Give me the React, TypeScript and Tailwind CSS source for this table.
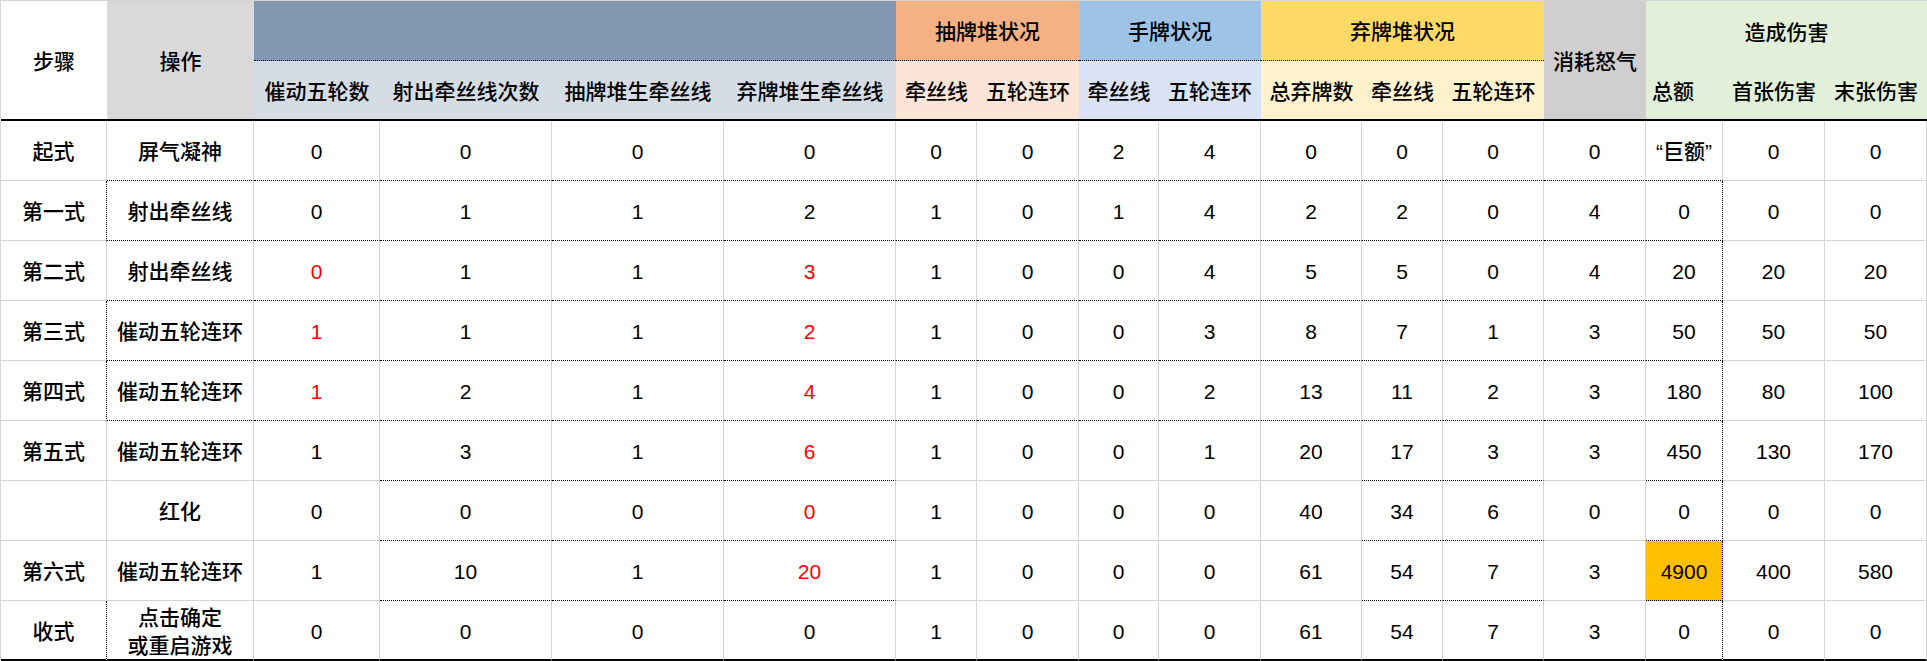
import React from "react";

const COLS =
  "grid-cols-[106px_147px_126px_172px_172px_172px_81px_102px_80px_102px_101px_81px_101px_102px_77px_102px_102px]";

const bottomCls: Record<string, string> = {
  g: "border-b border-b-[#d4d4d4]",
  d: "border-b border-b-black [border-bottom-style:dotted]!",
  k: "border-b-2 border-b-black",
};

const rightCls: Record<string, string> = {
  g: "border-r border-r-[#d4d4d4]",
  d: "border-r border-r-black [border-right-style:dotted]!",
};

// border maps: one letter per column, g = grey grid line, d = dotted black, k = thick black
const B_FULL = "g" + "d".repeat(14) + "gg";
const B_PART = "gggdddgggggddgdgg";
const B_LAST = "k".repeat(17);
const R_FIRST = "g".repeat(17);
const rDot = (left: string) => left + "g".repeat(13) + "dgg";

type Row = { step: string; op: string; v: string[]; red: number[]; b: string; r: string };

const rows: Row[] = [
  { step: "起式", op: "屏气凝神", v: ["0", "0", "0", "0", "0", "0", "2", "4", "0", "0", "0", "0", "“巨额”", "0", "0"], red: [], b: B_FULL, r: R_FIRST },
  { step: "第一式", op: "射出牵丝线", v: ["0", "1", "1", "2", "1", "0", "1", "4", "2", "2", "0", "4", "0", "0", "0"], red: [], b: B_FULL, r: rDot("d") },
  { step: "第二式", op: "射出牵丝线", v: ["0", "1", "1", "3", "1", "0", "0", "4", "5", "5", "0", "4", "20", "20", "20"], red: [0, 3], b: B_FULL, r: rDot("g") },
  { step: "第三式", op: "催动五轮连环", v: ["1", "1", "1", "2", "1", "0", "0", "3", "8", "7", "1", "3", "50", "50", "50"], red: [0, 3], b: B_FULL, r: rDot("d") },
  { step: "第四式", op: "催动五轮连环", v: ["1", "2", "1", "4", "1", "0", "0", "2", "13", "11", "2", "3", "180", "80", "100"], red: [0, 3], b: B_FULL, r: rDot("d") },
  { step: "第五式", op: "催动五轮连环", v: ["1", "3", "1", "6", "1", "0", "0", "1", "20", "17", "3", "3", "450", "130", "170"], red: [3], b: B_PART, r: rDot("g") },
  { step: "", op: "红化", v: ["0", "0", "0", "0", "1", "0", "0", "0", "40", "34", "6", "0", "0", "0", "0"], red: [3], b: B_PART, r: rDot("g") },
  { step: "第六式", op: "催动五轮连环", v: ["1", "10", "1", "20", "1", "0", "0", "0", "61", "54", "7", "3", "4900", "400", "580"], red: [3], b: B_PART, r: rDot("g") },
  { step: "收式", op: "点击确定\n或重启游戏", v: ["0", "0", "0", "0", "1", "0", "0", "0", "61", "54", "7", "3", "0", "0", "0"], red: [], b: B_LAST, r: rDot("d") },
];

function Cell({ text, b, r, red, hi }: { text: string; b: string; r: string; red?: boolean; hi?: boolean }) {
  return (
    <div
      className={`flex items-center justify-center pt-[3px] whitespace-pre-line text-center leading-[28px] ${bottomCls[b]} ${rightCls[r]} ${red ? "text-[#ff0000]" : ""} ${hi ? "bg-[#ffc000]" : ""}`}
    >
      {text}
    </div>
  );
}

const sub = "flex items-center justify-center pt-[3px] border-b-2 border-b-black";

export default function App() {
  return (
    <div className="w-[1927px] h-[661px] bg-white overflow-hidden text-[21px] font-medium text-black font-['Liberation_Sans','Noto_Sans_CJK_SC',sans-serif]">
      <div className={`grid ${COLS} grid-rows-[60px_60px_repeat(9,60px)] border-t border-l border-[#d4d4d4]`}>
        {/* header, first band */}
        <div className="row-span-2 flex items-center justify-center pt-[3px] bg-white border-b-2 border-b-black">步骤</div>
        <div className="row-span-2 flex items-center justify-center pt-[3px] bg-[#d9d9d9] border-b-2 border-b-black">操作</div>
        <div className="col-span-4 bg-[#8497b0] border-b border-b-black border-dotted" />
        <div className="col-span-2 flex items-center justify-center pt-[3px] bg-[#f4b183] border-b border-b-black border-dotted">抽牌堆状况</div>
        <div className="col-span-2 flex items-center justify-center pt-[3px] bg-[#9dc3e6] border-b border-b-black border-dotted">手牌状况</div>
        <div className="col-span-3 flex items-center justify-center pt-[3px] bg-[#ffd966] border-b border-b-black border-dotted">弃牌堆状况</div>
        <div className="row-span-2 flex items-center justify-center pt-[3px] bg-[#d0cece] border-b-2 border-b-black">消耗怒气</div>
        <div className="col-span-3 flex items-center justify-center pt-[3px] bg-[#e2f0d9]">造成伤害</div>

        {/* header, second band */}
        <div className={`${sub} bg-[#d6dce4]`}>催动五轮数</div>
        <div className={`${sub} bg-[#d6dce4]`}>射出牵丝线次数</div>
        <div className={`${sub} bg-[#d6dce4]`}>抽牌堆生牵丝线</div>
        <div className={`${sub} bg-[#d6dce4]`}>弃牌堆生牵丝线</div>
        <div className={`${sub} bg-[#fce4d6]`}>牵丝线</div>
        <div className={`${sub} bg-[#fce4d6]`}>五轮连环</div>
        <div className={`${sub} bg-[#dae3f3]`}>牵丝线</div>
        <div className={`${sub} bg-[#dae3f3]`}>五轮连环</div>
        <div className={`${sub} bg-[#fff2cc]`}>总弃牌数</div>
        <div className={`${sub} bg-[#fff2cc]`}>牵丝线</div>
        <div className={`${sub} bg-[#fff2cc]`}>五轮连环</div>
        <div className="flex items-center justify-start pl-[6px] pt-[3px] border-b-2 border-b-black bg-[#e2f0d9]">总额</div>
        <div className={`${sub} bg-[#e2f0d9]`}>首张伤害</div>
        <div className={`${sub} bg-[#e2f0d9]`}>末张伤害</div>

        {/* body */}
        {rows.map((row, i) => (
          <React.Fragment key={i}>
            <Cell text={row.step} b={row.b[0]} r={row.r[0]} />
            <Cell text={row.op} b={row.b[1]} r={row.r[1]} />
            {row.v.map((v, j) => (
              <Cell
                key={j}
                text={v}
                b={row.b[j + 2]}
                r={row.r[j + 2]}
                red={row.red.includes(j)}
                hi={v === "4900"}
              />
            ))}
          </React.Fragment>
        ))}
      </div>
    </div>
  );
}
